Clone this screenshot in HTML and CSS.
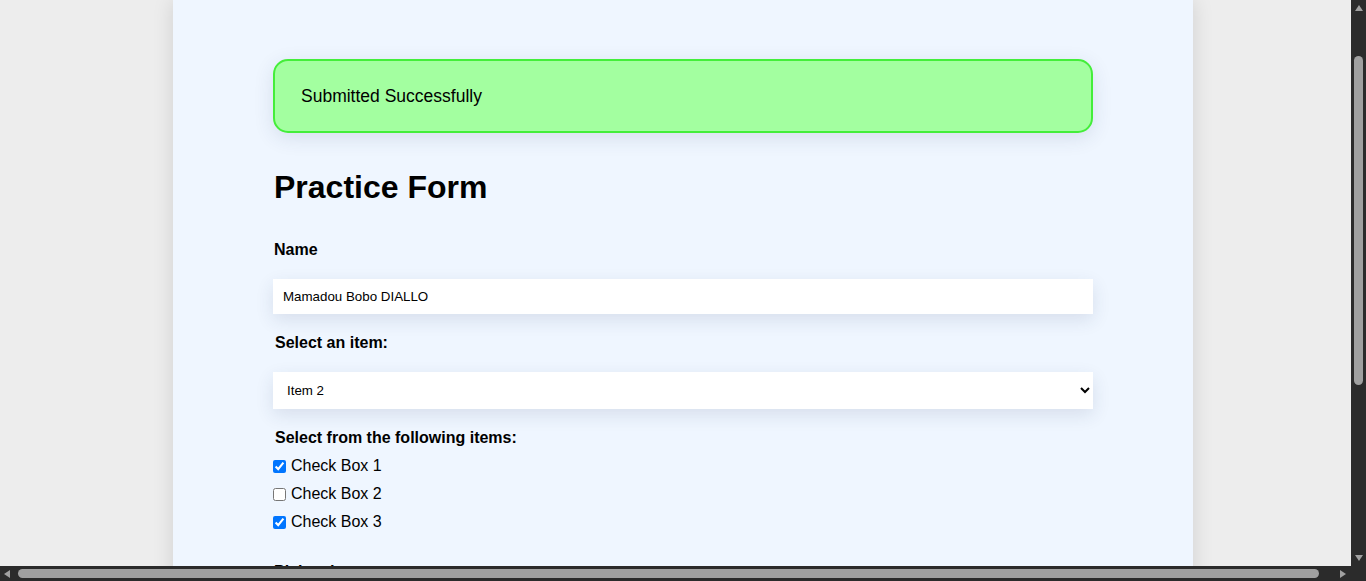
FILE: index.html
```html
<!DOCTYPE html>
<html lang="en">
<head>
<meta charset="utf-8">
<title>Practice Form</title>
<link rel="stylesheet" href="styles.css">
</head>
<body>
<div class="page">
  <main class="card">
    <div class="alert">Submitted Successfully</div>
    <h1 class="title">Practice Form</h1>
    <form class="form">
      <label class="label label-name" for="name">Name</label>
      <input class="field" id="name" type="text" value="Mamadou Bobo DIALLO">
      <label class="label label-indent" for="item">Select an item:</label>
      <select class="field select" id="item">
        <option>Item 1</option>
        <option selected>Item 2</option>
        <option>Item 3</option>
      </select>
      <div class="label label-indent label-checks">Select from the following items:</div>
      <label class="check"><input type="checkbox" checked> Check Box 1</label>
      <label class="check"><input type="checkbox"> Check Box 2</label>
      <label class="check"><input type="checkbox" checked> Check Box 3</label>
      <label class="label label-date" for="date">Pick a date:</label>
      <input class="field" id="date" type="date">
      <label class="label" for="msg">Message</label>
      <textarea class="field area" id="msg"></textarea>
    </form>
  </main>
</div>
<div class="sb sb-v" aria-hidden="true">
  <span class="arrow arrow-up"></span>
  <span class="thumb thumb-v"></span>
  <span class="arrow arrow-down"></span>
</div>
<div class="sb sb-h" aria-hidden="true">
  <span class="arrow arrow-left"></span>
  <span class="thumb thumb-h"></span>
  <span class="arrow arrow-right"></span>
</div>
<div class="sb-corner" aria-hidden="true"></div>
</body>
</html>
```

FILE: styles.css
```css
html, body {
  margin: 0;
  padding: 0;
}
body {
  background: #ededed;
  font-family: "Liberation Sans", Arial, sans-serif;
  color: #000;
}
.page {
  width: 100vw;
}
.card {
  width: 820px;
  margin: 0 auto;
  padding: 59px 100px 60px;
  background: #eff6ff;
  box-shadow: 0 0 20px rgba(0, 0, 0, 0.12);
}
.alert {
  box-sizing: border-box;
  height: 74px;
  display: flex;
  align-items: center;
  padding: 0 26px;
  font-size: 17.5px;
  background: #a3ffa0;
  border: 2px solid #44ee3a;
  border-radius: 15px;
  box-shadow: 0 5px 20px rgba(40, 60, 100, 0.12);
}
.title {
  font-size: 32px;
  font-weight: bold;
  margin: 36px 0 0 1px;
  line-height: 37px;
}
.form {
  display: flex;
  flex-direction: column;
  align-items: flex-start;
}
.label {
  font-size: 16px;
  font-weight: bold;
  line-height: 18px;
  margin-left: 1px;
}
.label-name {
  margin-top: 35px;
}
.label-indent {
  margin-left: 2px;
}
.field {
  width: 820px;
  box-sizing: border-box;
  border: none;
  background: #fff;
  font-family: "Liberation Sans", Arial, sans-serif;
  font-size: 13.33px;
  color: #000;
  box-shadow: 0 6px 18px rgba(40, 60, 100, 0.12);
  outline: none;
}
#name {
  height: 35px;
  padding: 0 10px;
  margin: 20px 0 20px;
}
.select {
  height: 37px;
  padding: 0 10px;
  margin: 20px 0 20px;
}
.label-checks {
  margin-bottom: 5px;
}
.check {
  display: flex;
  align-items: center;
  height: 28px;
  font-size: 16px;
}
.check input {
  margin: 0 5px 0 0;
  width: 13px;
  height: 13px;
}
.label-date {
  margin-top: 27px;
}
#date {
  height: 35px;
  padding: 0 10px;
  margin: 20px 0 20px;
}
.area {
  height: 100px;
  margin-top: 20px;
}

/* drawn scrollbars (overlay the viewport edges) */
.sb {
  position: fixed;
  background: #2b2b2b;
  display: flex;
  align-items: center;
  z-index: 10;
}
.sb-v {
  top: 0;
  right: 0;
  width: 15px;
  height: 566px;
  flex-direction: column;
}
.sb-h {
  left: 0;
  bottom: 0;
  width: 1351px;
  height: 15px;
  flex-direction: row;
}
.sb-corner {
  position: fixed;
  right: 0;
  bottom: 0;
  width: 15px;
  height: 15px;
  background: #2b2b2b;
  z-index: 10;
}
.arrow {
  width: 0;
  height: 0;
  flex: none;
}
.arrow-up {
  margin-top: 5px;
  border-left: 4px solid transparent;
  border-right: 4px solid transparent;
  border-bottom: 6px solid #a0a0a0;
}
.arrow-down {
  margin-top: auto;
  margin-bottom: 5px;
  border-left: 4px solid transparent;
  border-right: 4px solid transparent;
  border-top: 6px solid #a0a0a0;
}
.arrow-left {
  margin-left: 4px;
  border-top: 4px solid transparent;
  border-bottom: 4px solid transparent;
  border-right: 6px solid #a0a0a0;
}
.arrow-right {
  margin-left: auto;
  margin-right: 5px;
  border-top: 4px solid transparent;
  border-bottom: 4px solid transparent;
  border-left: 6px solid #a0a0a0;
}
.thumb {
  background: #a0a0a0;
  border-radius: 5px;
  flex: none;
}
.thumb-v {
  width: 9px;
  height: 329px;
  margin-top: 45px;
}
.thumb-h {
  height: 9px;
  width: 1301px;
  margin-left: 8px;
}
```
